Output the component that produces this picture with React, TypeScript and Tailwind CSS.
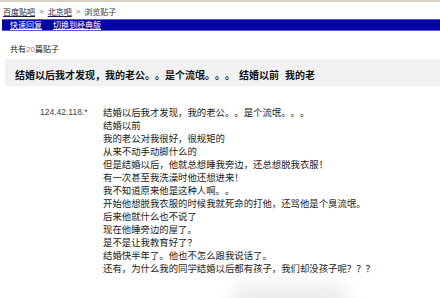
import React from "react";

const lines = [
  "结婚以后我才发现，我的老公。。是个流氓。。。",
  "结婚以前",
  "我的老公对我很好，很规矩的",
  "从来不动手动脚什么的",
  "但是结婚以后，他就总想睡我旁边，还总想脱我衣服！",
  "有一次甚至我洗澡时他还想进来！",
  "我不知道原来他是这种人啊。。",
  "开始他想脱我衣服的时候我就死命的打他，还骂他是个臭流氓。",
  "后来他就什么也不说了",
  "现在他睡旁边的屋了。",
  "是不是让我教育好了？",
  "结婚快半年了。他也不怎么跟我说话了。",
  "还有，为什么我的同学结婚以后都有孩子，我们却没孩子呢？？？",
];

export default function App() {
  return (
    <div
      className="relative w-[440px] h-[298px] overflow-hidden bg-white text-[#222] [text-spacing-trim:space-all]"
      style={{ fontFamily: '"Noto Sans CJK SC", "Noto Sans", sans-serif' }}
    >
      <div className="h-[2px] bg-[#d8d0c2]" />
      <div className="pt-[5px] pl-[3px] text-[8px] leading-[10px] h-[16px] flex">
        <span className="underline text-[#1c1c3c]">百度贴吧</span>
        <span className="px-[4px] text-[#666]" style={{ fontFamily: '"Liberation Sans", sans-serif' }}>&gt;</span>
        <span className="underline text-[#1c1c3c]">北京吧</span>
        <span className="px-[4px] text-[#666]" style={{ fontFamily: '"Liberation Sans", sans-serif' }}>&gt;</span>
        <span className="text-[#333]">浏览贴子</span>
      </div>
      <div className="mt-[1px] ml-[2px] h-[12px] bg-[#0404a6] border-y border-[#5a5ac8] flex items-center text-white text-[8px] leading-[10px]">
        <span className="ml-[8px] underline">快速回复</span>
        <span className="ml-[11px] underline">切换到经典版</span>
      </div>
      <div className="mt-[13px] pl-[10px] text-[8px] leading-[10px] text-[#222]">
        共有<span className="text-[#d06a6a]" style={{ fontFamily: '"Liberation Sans", sans-serif' }}>20</span>篇贴子
      </div>
      <div className="mt-[4px] ml-[5px] h-[27px] bg-[#f1f1f1] pl-[10px] pt-[10px]">
        <div className="text-[10px] leading-[12px] font-bold text-[#111] whitespace-nowrap">
          结婚以后我才发现，我的老公。。是个流氓。。。
          <span className="ml-[4px]">结婚以前</span>
          <span className="ml-[6px]">我的老</span>
        </div>
      </div>
      <div className="mt-[20px] flex pl-[40px]">
        <div
          className="w-[63px] shrink-0 text-[8.5px] leading-[13px] text-[#444]"
          style={{ fontFamily: '"Liberation Sans", sans-serif' }}
        >
          124.42.118.*
        </div>
        <div className="text-[9.4px] leading-[13px] text-[#1a1a1a] whitespace-nowrap">
          {lines.map((l, i) => (
            <div key={i}>{l}</div>
          ))}
        </div>
      </div>
      <div className="absolute left-[230px] top-[284px] w-[120px] h-[30px] rounded-full bg-[#e6e6e6] blur-[8px] opacity-70" />
    </div>
  );
}
